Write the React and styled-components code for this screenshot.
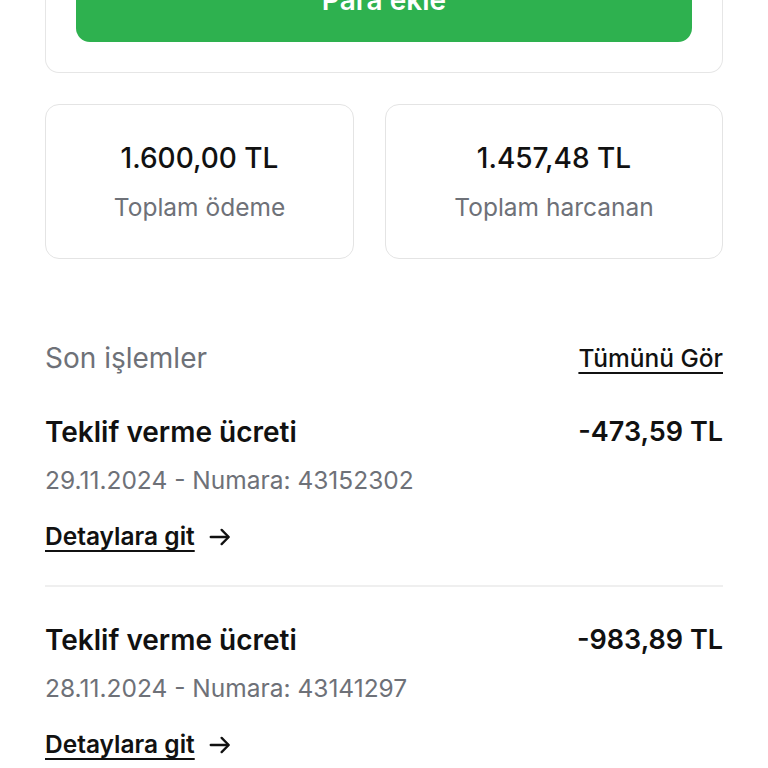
import styled, { createGlobalStyle } from 'styled-components';

const GlobalStyle = createGlobalStyle`
  html, body {
    margin: 0;
    padding: 0;
    background: #ffffff;
    font-family: Inter, "Noto Sans", sans-serif;
    color: #111111;
  }
  body {
    overflow: hidden;
  }
`;

const transactions = [
  { id: 1, title: 'Teklif verme ücreti', amount: '-473,59 TL', date: '29.11.2024', number: '43152302' },
  { id: 2, title: 'Teklif verme ücreti', amount: '-983,89 TL', date: '28.11.2024', number: '43141297' }
];

const ArrowRight = () => (
  <svg width="26" height="26" viewBox="0 0 24 24" fill="none" stroke="#111" strokeWidth="2.2" strokeLinecap="round" strokeLinejoin="round">
    <path d="M3.5 12h16" />
    <path d="M13.5 5.5l6.5 6.5-6.5 6.5" />
  </svg>
);

export default function App() {
  return (
    <>
      <GlobalStyle />
      <Page>
        <BalanceCard>
          <AddButton>Para ekle</AddButton>
        </BalanceCard>

        <Stats>
          <StatCard>
            <StatValue>1.600,00 TL</StatValue>
            <StatLabel>Toplam ödeme</StatLabel>
          </StatCard>
          <StatCard>
            <StatValue>1.457,48 TL</StatValue>
            <StatLabel>Toplam harcanan</StatLabel>
          </StatCard>
        </Stats>

        <SectionHeader>
          <SectionTitle>Son işlemler</SectionTitle>
          <SeeAll>Tümünü Gör</SeeAll>
        </SectionHeader>

        <List>
          {transactions.map((t) => (
            <Item key={t.id}>
              <ItemTop>
                <ItemTitle>{t.title}</ItemTitle>
                <ItemAmount>{t.amount}</ItemAmount>
              </ItemTop>
              <ItemMeta>
                {t.date} - Numara: {t.number}
              </ItemMeta>
              <DetailLink>
                <span>Detaylara git</span>
                <ArrowRight />
              </DetailLink>
            </Item>
          ))}
        </List>
      </Page>
    </>
  );
}

const Page = styled.div`
  padding: 0 45px;
  margin-top: -70px;
`;

const BalanceCard = styled.div`
  border: 1.5px solid #e6e6e6;
  border-top: none;
  border-radius: 0 0 14px 14px;
  padding: 32px 30px 30px;
`;

const AddButton = styled.div`
  height: 80px;
  box-sizing: border-box;
  padding-bottom: 4px;
  border-radius: 14px;
  background: #2eb14f;
  color: #ffffff;
  font-size: 28px;
  font-weight: 600;
  display: flex;
  align-items: center;
  justify-content: center;
`;

const Stats = styled.div`
  display: grid;
  grid-template-columns: 309px 1fr;
  gap: 31px;
  margin-top: 31px;
`;

const StatCard = styled.div`
  height: 155px;
  box-sizing: border-box;
  border: 1.5px solid #e4e4e4;
  border-radius: 14px;
  display: flex;
  flex-direction: column;
  align-items: center;
  justify-content: center;
  gap: 18px;
`;

const StatValue = styled.div`
  font-size: 28px;
  line-height: 34px;
  font-weight: 500;
  color: #111;
`;

const StatLabel = styled.div`
  font-size: 24.5px;
  line-height: 29px;
  color: #6e7178;
`;

const SectionHeader = styled.div`
  display: flex;
  justify-content: space-between;
  align-items: center;
  margin-top: 82px;
`;

const SectionTitle = styled.div`
  font-size: 28px;
  line-height: 34px;
  color: #6e7178;
`;

const SeeAll = styled.a`
  font-size: 24.5px;
  line-height: 29px;
  font-weight: 500;
  color: #111;
  text-decoration: underline;
  text-decoration-thickness: 2px;
  text-underline-offset: 5px;
`;

const List = styled.div`
  margin-top: 40px;
`;

const Item = styled.div`
  padding: 0 0 34px;
  & + & {
    border-top: 2px solid #efefef;
    padding-top: 36px;
  }
`;

const ItemTop = styled.div`
  display: flex;
  justify-content: space-between;
  align-items: center;
`;

const ItemTitle = styled.div`
  font-size: 28px;
  line-height: 34px;
  font-weight: 600;
`;

const ItemAmount = styled.div`
  font-size: 27px;
  line-height: 34px;
  font-weight: 600;
`;

const ItemMeta = styled.div`
  margin-top: 17px;
  font-size: 24.5px;
  line-height: 29px;
  color: #6e7178;
`;

const DetailLink = styled.a`
  display: inline-flex;
  align-items: center;
  gap: 12px;
  margin-top: 27px;
  font-size: 24.5px;
  line-height: 29px;
  font-weight: 600;
  color: #111;
  span {
    text-decoration: underline;
    text-decoration-thickness: 2px;
    text-underline-offset: 5px;
  }
`;
